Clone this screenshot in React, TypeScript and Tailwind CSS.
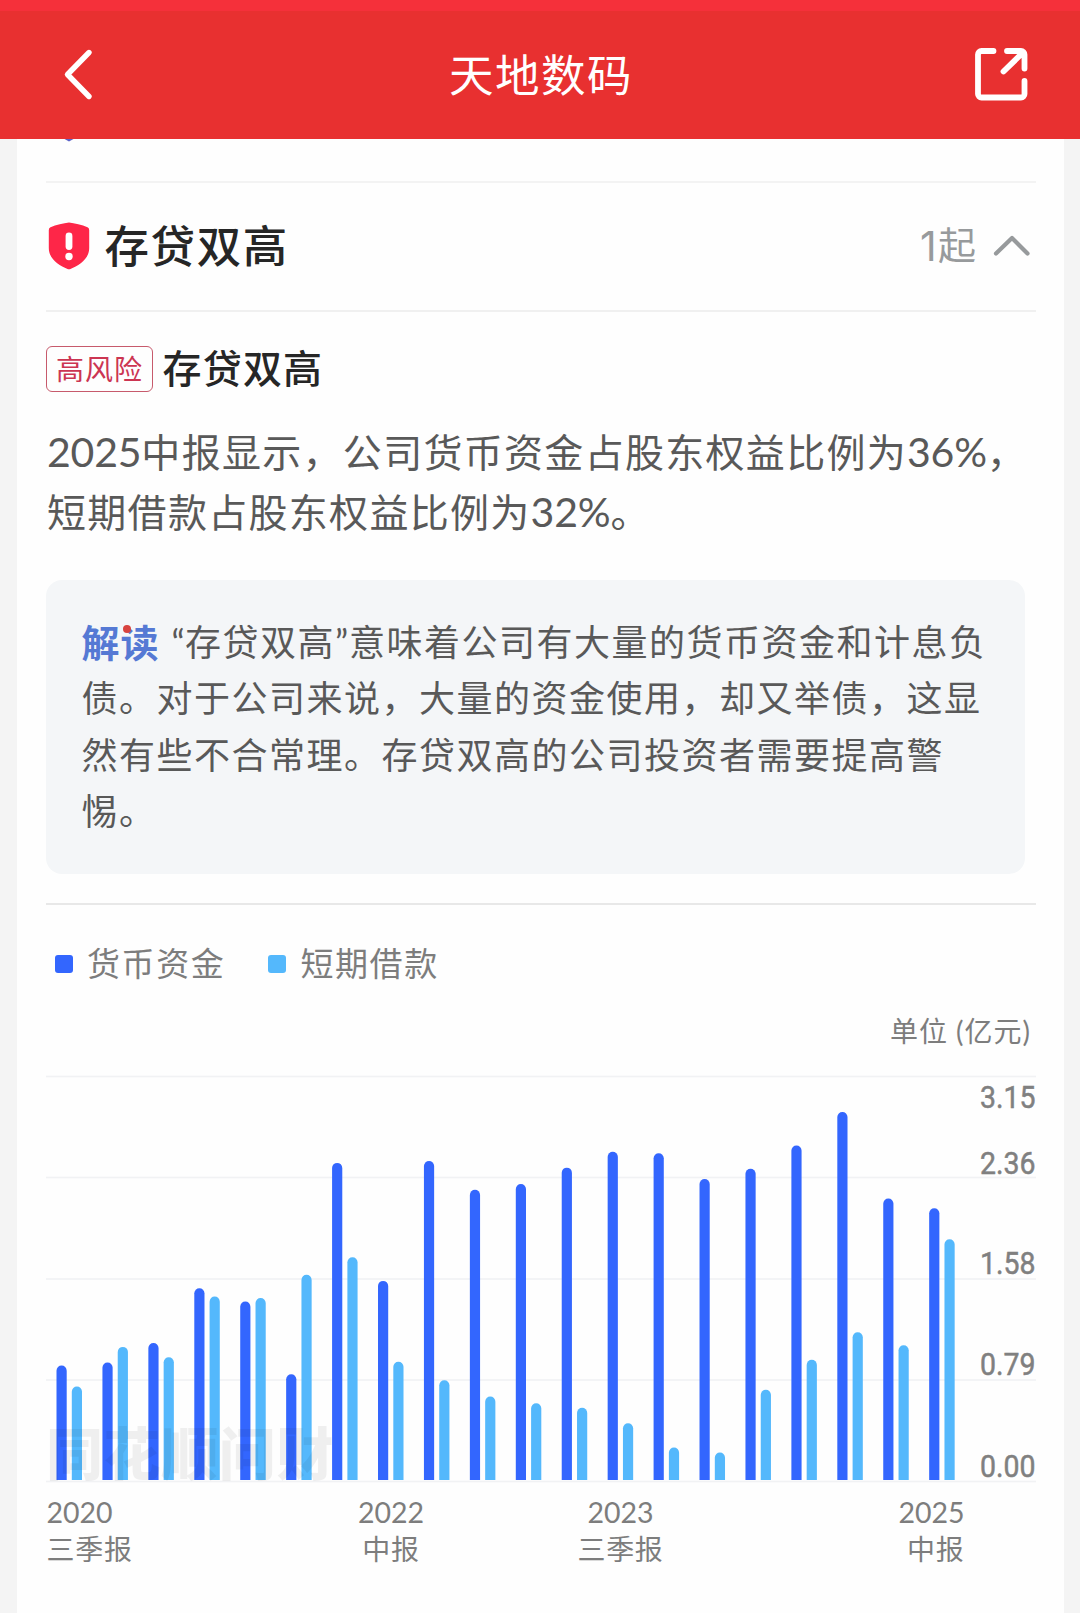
type Report = { cash: number; loan: number };

const reports: Report[] = [
  { cash: 0.89, loan: 0.727 },
  { cash: 0.914, loan: 1.036 },
  { cash: 1.067, loan: 0.956 },
  { cash: 1.493, loan: 1.428 },
  { cash: 1.389, loan: 1.417 },
  { cash: 0.823, loan: 1.597 },
  { cash: 2.469, loan: 1.734 },
  { cash: 1.55, loan: 0.921 },
  { cash: 2.484, loan: 0.776 },
  { cash: 2.259, loan: 0.649 },
  { cash: 2.305, loan: 0.597 },
  { cash: 2.432, loan: 0.561 },
  { cash: 2.555, loan: 0.442 },
  { cash: 2.544, loan: 0.252 },
  { cash: 2.344, loan: 0.213 },
  { cash: 2.424, loan: 0.703 },
  { cash: 2.604, loan: 0.935 },
  { cash: 2.866, loan: 1.15 },
  { cash: 2.191, loan: 1.049 },
  { cash: 2.116, loan: 1.875 },
];

const yTicks = [
  { label: '3.15', line: 10.5, text: 41.5 },
  { label: '2.36', line: 111.5, text: 107.5 },
  { label: '1.58', line: 213, text: 207.5 },
  { label: '0.79', line: 314, text: 309 },
  { label: '0.00', line: 415.5, text: 410.5 },
];

const xTicks = [
  { year: '2020', name: '三季报', x: 0.5, anchor: 'start' as const },
  { year: '2022', name: '中报', x: 345, anchor: 'middle' as const },
  { year: '2023', name: '三季报', x: 574.5, anchor: 'middle' as const },
  { year: '2025', name: '中报', x: 918.5, anchor: 'end' as const },
];

const BASE = 414;
const UNIT = 128.4;

// Bar with a rounded top and a flat foot
function barPath(x: number, value: number) {
  const top = BASE - value * UNIT;
  return `M${x} ${BASE}V${top + 5}a5.1 5.1 0 0 1 10.2 0V${BASE}Z`;
}

function Header() {
  return (
    <header className="h-[139px] bg-[#e83030] border-t-[11px] border-[#f5303a] flex items-center justify-between pl-[62px] pr-[50px] text-white">
      <svg width="34" height="54" viewBox="0 0 34 54" fill="none" stroke="currentColor" strokeWidth="5.4" strokeLinecap="round" strokeLinejoin="round">
        <path d="M27 4.5L5.5 26.5L27 48.5" />
      </svg>
      <h1 className="text-[44.5px] leading-[60px] tracking-[1.5px] pl-[14px] pb-px">天地数码</h1>
      <svg width="58" height="58" viewBox="0 0 58 58" fill="none" stroke="currentColor" strokeWidth="5.8" strokeLinecap="round" strokeLinejoin="round">
        <path d="M21.5 5H9.5a3.5 3.5 0 0 0-3.5 3.5V48a3.5 3.5 0 0 0 3.5 3.5H49a3.5 3.5 0 0 0 3.5-3.5V35" />
        <path d="M35 5H49a3.5 3.5 0 0 1 3.5 3.5V22.5M51 6.5L31.5 25.5" />
      </svg>
    </header>
  );
}

function RiskChart() {
  return (
    <svg width="990" height="500" viewBox="0 0 990 500" className="block overflow-visible">
      {yTicks.map((t) => (
        <rect key={t.label} x="0" y={t.line - 0.8} width="990" height="1.6" fill="#f1f2f4" />
      ))}
      {reports.map((r, i) => (
        <g key={i}>
          <path d={barPath(10.5 + i * 45.93, r.cash)} fill="#3366fe" />
          <path d={barPath(25.8 + i * 45.93, r.loan)} fill="#54b8fc" />
        </g>
      ))}
      <text x="0" y="408.5" fontSize="57" letterSpacing="0.6" fontWeight="900" fill="#000" fillOpacity="0.06">
        同花顺问财
      </text>
      {yTicks.map((t) => (
        <text
          key={t.label}
          x="934"
          y={t.text}
          textLength="55.5"
          lengthAdjust="spacingAndGlyphs"
          fontSize="31"
          fill="#808080"
          stroke="#808080"
          strokeWidth="0.5"
          className="font-['Roboto']"
        >
          {t.label}
        </text>
      ))}
      {xTicks.map((t) => (
        <g key={t.year} fill="#7d7d7d" textAnchor={t.anchor}>
          <text x={t.x} y="456.5" fontSize="28.5">{t.year}</text>
          <text x={t.x} y="493.5" fontSize="28" letterSpacing="0.7">{t.name}</text>
        </g>
      ))}
    </svg>
  );
}

export default function App() {
  return (
    <div className="w-[1080px] h-[1613px] overflow-hidden bg-[#f4f4f4] font-['Lato','Noto_Sans_CJK_SC',sans-serif] whitespace-nowrap">
      <Header />

      <main className="ml-[17px] w-[1047px] h-[1474px] bg-[#fefefe] pl-[29px] pr-[28px]">
        {/* Tail of the previous section */}
        <div className="h-[44px] border-b-2 border-[#f3f3f3]">
          <svg width="50" height="4" viewBox="0 0 50 4">
            <path d="M18.5 0h9l-4.5 2.500z" fill="#5a62c8" />
          </svg>
        </div>

        {/* Section title */}
        <div className="h-[129px] border-b-2 border-[#f0f0f0] pb-[2px] flex items-center justify-between">
          <div className="flex items-center">
            <svg width="46" height="50" viewBox="0 0 46 50">
              <path d="M23 1.5C28.5 2 36 4 41.5 6.2Q43.2 7 43.2 9V27C43.2 38 33 44.5 24.5 48Q23 48.7 21.5 48C13 44.5 2.8 38 2.8 27V9Q2.8 7 4.5 6.2C10 4 17.5 2 23 1.5Z" fill="#fe2648" />
              <rect x="19.6" y="11.5" width="6.8" height="17.5" rx="3.4" fill="#fff" />
              <circle cx="23" cy="35.5" r="3.7" fill="#fff" />
            </svg>
            <h2 className="ml-[12.5px] text-[44.5px] leading-[60px] tracking-[1.6px] font-medium text-[#262626]">存贷双高</h2>
          </div>
          <div className="flex items-center text-[#979a9c] pr-[6px]">
            <span className="w-[18px] font-['Inter'] text-[41px] leading-[50px] tracking-[-3px]">1</span>
            <span className="text-[38px] leading-[50px] pb-[4px]">起</span>
            <svg className="ml-[14px]" width="40" height="26" viewBox="0 0 40 26" fill="none" stroke="currentColor" strokeWidth="4.2" strokeLinecap="round" strokeLinejoin="round">
              <path d="M6 20.500L22 5L37.500 20.500" />
            </svg>
          </div>
        </div>

        {/* Risk item */}
        <div className="mt-[34px] h-[46px] flex items-center">
          <span className="w-[107px] h-[46px] border-[1.5px] border-[#c75a6c] rounded-[6px] flex items-center justify-center text-[28px] tracking-[1px] text-[#cc3552]">高风险</span>
          <h3 className="ml-[9.5px] pb-[2px] text-[39px] leading-[46px] tracking-[1.2px] font-medium text-[#262626]">存贷双高</h3>
        </div>

        <p className="mt-[30px] ml-px text-[39px] leading-[60px] tracking-[1.3px] text-[#595959]">
          <span className="text-[41px] leading-[0] tracking-[-0.2px]">2025</span>中报显示，公司货币资金占股东权益比例为
          <span className="text-[41px] leading-[0] tracking-[-0.2px]">36%</span>，
          <br />
          短期借款占股东权益比例为<span className="text-[41px] leading-[0] tracking-[-0.2px]">32%</span>。
        </p>

        <div className="mt-[38px] w-[979px] h-[294px] rounded-[16px] bg-[#f4f6f8] pl-[35.5px] pt-[34px] text-[36px] leading-[56.3px] tracking-[1.5px] text-[#595959]">
          <div className="flex">
            <span className="relative w-[90px] text-[38px] tracking-[1px] font-bold text-[#5579d4]">
              解读
              <i className="absolute left-[41px] top-[11px] size-[8px] rounded-full bg-[#d8433f]" />
            </span>
            <span className="w-[13.5px]">“</span>
            <span>存贷双高</span>
            <span className="w-[14px]">”</span>
            <span>意味着公司有大量的货币资金和计息负</span>
          </div>
          债。对于公司来说，大量的资金使用，却又举债，这显
          <br />
          然有些不合常理。存贷双高的公司投资者需要提高警
          <br />
          惕。
        </div>

        <div className="mt-[29px] h-[2px] bg-[#e8e8e8]" />

        {/* Legend */}
        <div className="mt-[34px] h-[50px] flex items-center text-[33px] tracking-[1.6px] text-[#7d7d7d]">
          <span className="ml-[9px] size-[18px] rounded-[3px] bg-[#3366fe]" />
          <span className="ml-[14px]">货币资金</span>
          <span className="ml-[43px] size-[18px] rounded-[3px] bg-[#54b8fc]" />
          <span className="ml-[14px]">短期借款</span>
        </div>

        <div className="mt-[22px] h-[40px] pr-[5px] text-right text-[28px] leading-[40px] tracking-[1px] text-[#7d7d7d]">单位 (亿元)</div>

        <div className="mt-[15px]">
          <RiskChart />
        </div>
      </main>
    </div>
  );
}
